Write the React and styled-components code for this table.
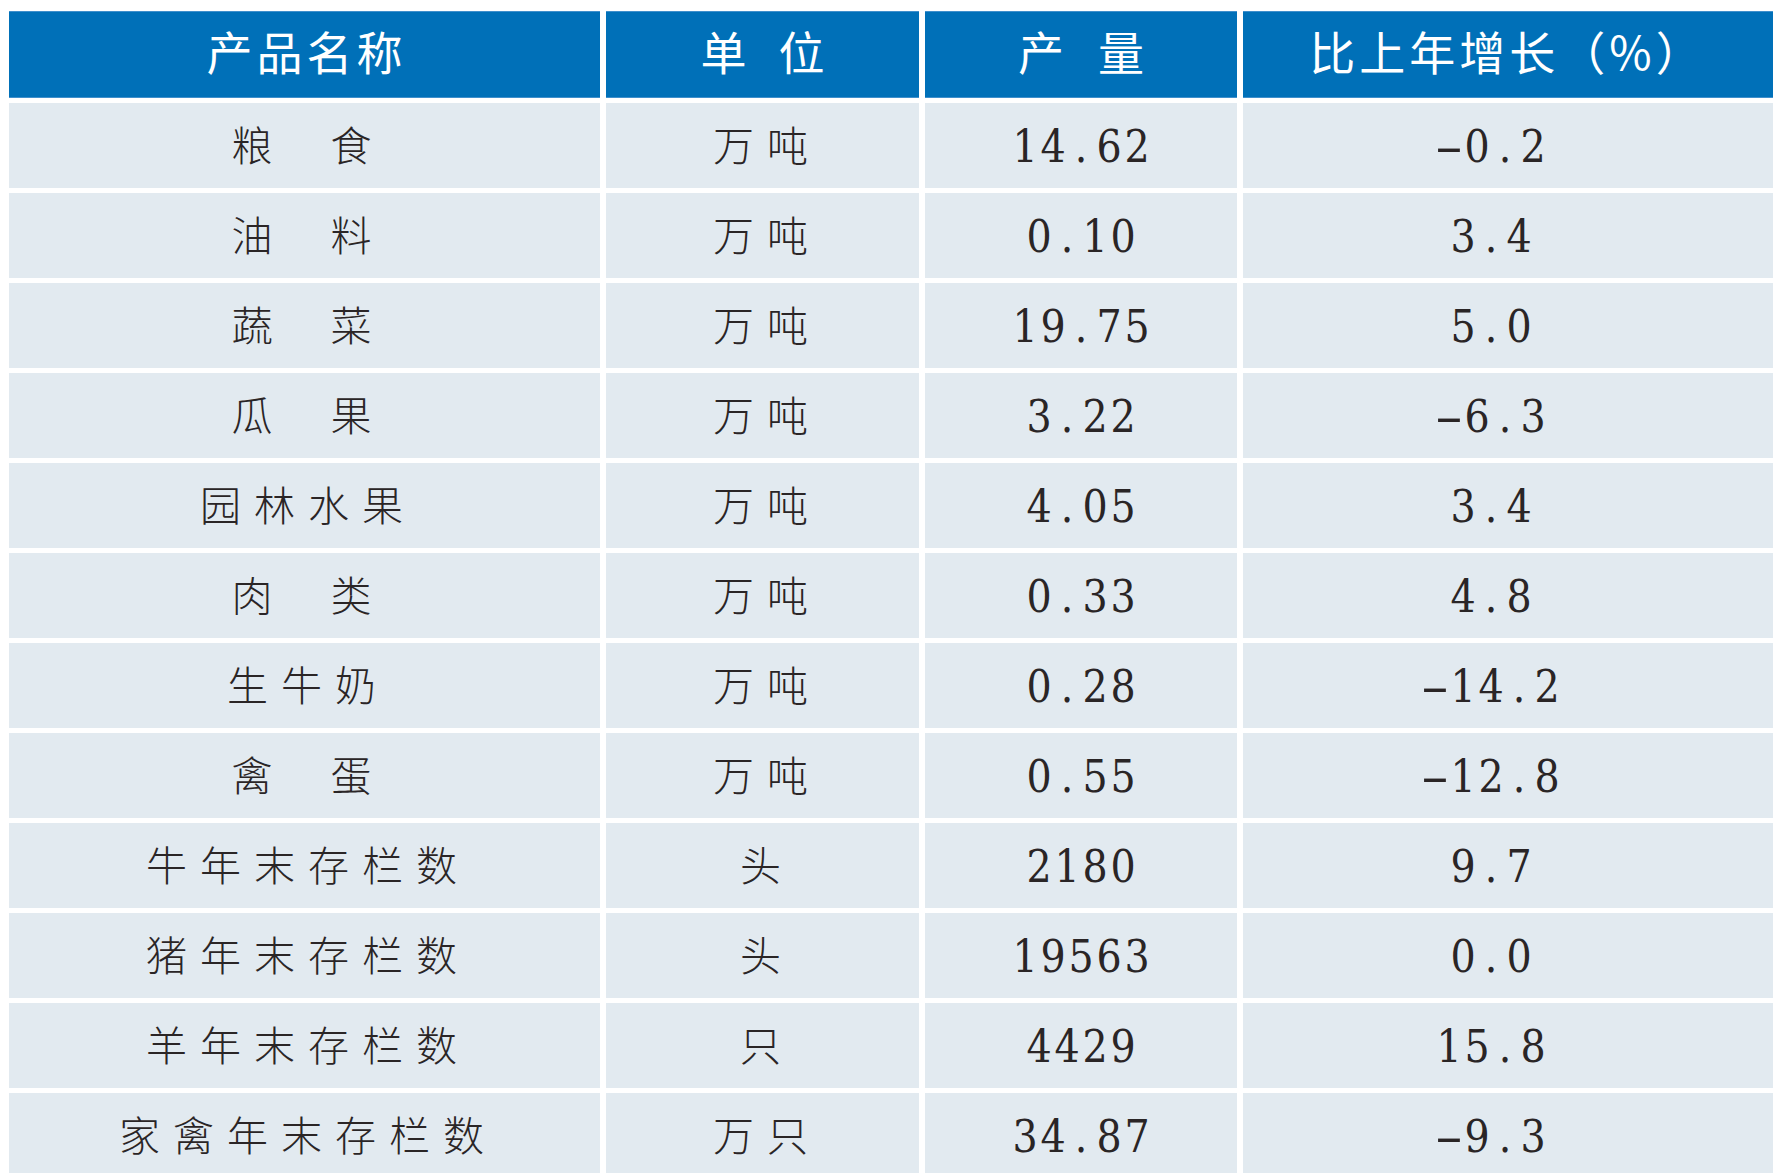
import React from 'react'
import styled, { createGlobalStyle } from 'styled-components'

const GlobalStyle = createGlobalStyle`
  html, body {
    margin: 0;
    padding: 0;
    overflow: hidden;
    background: #ffffff;
  }
`;

const rows = [
  { name: '粮食', unit: '万吨', output: '14.62', growth: '-0.2' },
  { name: '油料', unit: '万吨', output: '0.10', growth: '3.4' },
  { name: '蔬菜', unit: '万吨', output: '19.75', growth: '5.0' },
  { name: '瓜果', unit: '万吨', output: '3.22', growth: '-6.3' },
  { name: '园林水果', unit: '万吨', output: '4.05', growth: '3.4' },
  { name: '肉类', unit: '万吨', output: '0.33', growth: '4.8' },
  { name: '生牛奶', unit: '万吨', output: '0.28', growth: '-14.2' },
  { name: '禽蛋', unit: '万吨', output: '0.55', growth: '-12.8' },
  { name: '牛年末存栏数', unit: '头', output: '2180', growth: '9.7' },
  { name: '猪年末存栏数', unit: '头', output: '19563', growth: '0.0' },
  { name: '羊年末存栏数', unit: '只', output: '4429', growth: '15.8' },
  { name: '家禽年末存栏数', unit: '万只', output: '34.87', growth: '-9.3' },
];

function Chars({ text, gap }) {
  return (
    <CharRow $gap={gap}>
      {[...text].map((c, i) => <span key={i}>{c}</span>)}
    </CharRow>
  )
}

// numbers are set on a fixed pitch, one box per character
function Figure({ value }) {
  return (
    <FigureRow>
      {[...value].map((c, i) => <Glyph key={i} $dash={c === '-'}>{c}</Glyph>)}
    </FigureRow>
  )
}

export default function App() {
  return (
    <Page>
      <GlobalStyle />
      <Table>
        <HeaderCell><Chars text="产品名称" gap={4} /></HeaderCell>
        <HeaderCell><Chars text="单位" gap={32} /></HeaderCell>
        <HeaderCell><Chars text="产量" gap={34} /></HeaderCell>
        <HeaderCell $shift={5}><Chars text="比上年增长（%）" gap={4} /></HeaderCell>

        {rows.map(r => (
          <React.Fragment key={r.name}>
            <Cell $shift={6}>
              <Chars text={r.name} gap={r.name.length === 2 ? 58 : 13} />
            </Cell>
            <Cell $shift={4}><Chars text={r.unit} gap={13} /></Cell>
            <Cell><Figure value={r.output} /></Cell>
            <Cell $shift={34}><Figure value={r.growth} /></Cell>
          </React.Fragment>
        ))}
      </Table>
    </Page>
  )
}

const Page = styled.div`
  width: 1773px;
  height: 1173px;
  box-sizing: border-box;
  padding: 11px 0 0 9px;
  overflow: hidden;
  background: #ffffff;
`;

const Table = styled.div`
  display: grid;
  grid-template-columns: 591px 313px 312px 530px;
  grid-template-rows: 87px;
  grid-auto-rows: 85px;
  column-gap: 6px;
  row-gap: 5px;
`;

const HeaderCell = styled.div`
  display: flex;
  align-items: center;
  justify-content: center;
  box-sizing: border-box;
  padding-bottom: 10px;
  padding-right: ${p => p.$shift || 0}px;
  background: #0070b8;
  border-top: 1px solid #3f8fcc;
  border-bottom: 1px solid #3f8fcc;
  color: #ffffff;
  font-family: "Noto Sans CJK SC", "Noto Sans", sans-serif;
  font-weight: 400;
  font-size: 46px;
  line-height: 1;
`;

const Cell = styled.div`
  display: flex;
  align-items: center;
  justify-content: center;
  box-sizing: border-box;
  padding-bottom: 4px;
  padding-right: ${p => p.$shift || 0}px;
  background: #e2eaf0;
  color: #2a2526;
  font-family: "Noto Sans CJK SC", "Noto Sans", sans-serif;
  font-weight: 300;
  font-size: 41px;
  line-height: 1;
`;

const CharRow = styled.div`
  display: flex;
  gap: ${p => p.$gap}px;
`;

const FigureRow = styled.div`
  display: flex;
  margin-top: 6px;
  font-family: "DejaVu Serif", serif;
  font-stretch: condensed;
  font-size: 44px;
  color: #2a2526;
`;

const Glyph = styled.span`
  display: inline-block;
  width: 28px;
  text-align: center;
  transform: ${p => (p.$dash ? 'scaleX(2.2)' : 'none')};
`;
